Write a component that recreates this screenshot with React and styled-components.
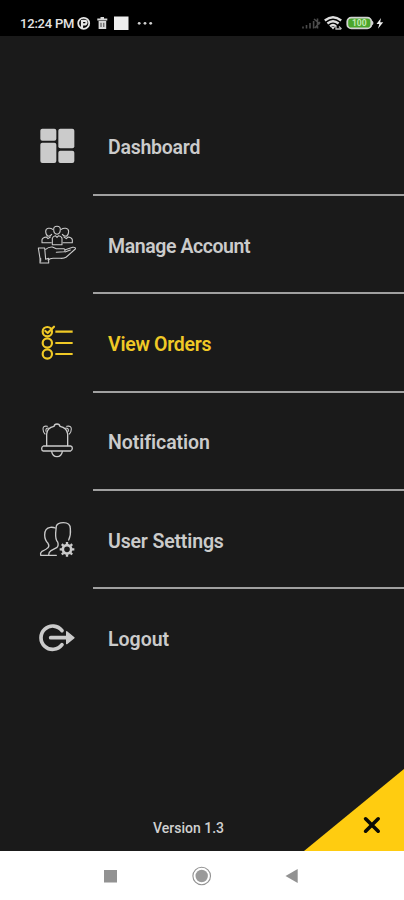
import React from "react";
import styled, { createGlobalStyle } from "styled-components";

const MENU = [
  { label: "Dashboard", icon: DashboardIcon, spacing: -0.25 },
  { label: "Manage Account", icon: ManageIcon, spacing: -0.42 },
  { label: "View Orders", icon: OrdersIcon, spacing: -0.27, active: true },
  { label: "Notification", icon: BellIcon, spacing: -0.06 },
  { label: "User Settings", icon: UsersIcon, spacing: -0.16 },
  { label: "Logout", icon: LogoutIcon, spacing: 0 },
];

export default function App() {
  return (
    <>
      <GlobalStyle />
      <Phone>
        <StatusBar>
          <Clock>12:24 PM</Clock>
          <StatusLeftIcons />
          <StatusRightIcons />
        </StatusBar>
        <Drawer>
          <Menu>
            {MENU.map(({ label, icon: Icon, spacing, active }) => (
              <MenuItem key={label} $active={active}>
                <IconBox>
                  <Icon />
                </IconBox>
                <MenuLabel $spacing={spacing}>{label}</MenuLabel>
              </MenuItem>
            ))}
          </Menu>
          <Footer>
            <Version>Version 1.3</Version>
            <CloseButton aria-label="Close">
              <svg width="20" height="20" viewBox="0 0 20 20">
                <path
                  d="M3.6 3.8L16.2 16.2M16.2 3.8L3.6 16.2"
                  stroke="#0b0b05"
                  strokeWidth="3.6"
                  strokeLinecap="round"
                />
              </svg>
            </CloseButton>
          </Footer>
        </Drawer>
        <NavBar>
          <NavIcons />
        </NavBar>
      </Phone>
    </>
  );
}

function StatusLeftIcons() {
  return (
    <svg width="78" height="18" viewBox="76 14 78 18">
      <circle cx="83.7" cy="23.3" r="5.5" fill="none" stroke="#e6e6e6" strokeWidth="1.8" />
      <path d="M82 20V28M82 20.8H85.4A2 2 0 0 1 85.4 24.4H83" fill="none" stroke="#e6e6e6" strokeWidth="2.2" />
      <path d="M97.3 19.5H107.3M100.5 18H104" stroke="#d8d8d8" strokeWidth="1.8" />
      <path d="M98.6 21H106.2V29H98.6Z" fill="#d8d8d8" />
      <path d="M101 22.8V27M103.8 22.8V27" stroke="#444" strokeWidth="1" />
      <rect x="114" y="16.5" width="14.5" height="13.5" fill="#efefef" />
      <g fill="#d0d0d0">
        <circle cx="139.2" cy="23.3" r="1.4" />
        <circle cx="145" cy="23.3" r="1.4" />
        <circle cx="150.7" cy="23.3" r="1.4" />
      </g>
    </svg>
  );
}

function StatusRightIcons() {
  return (
    <RightIcons width="86" height="18" viewBox="300 14 86 18">
      <path
        d="M303 28.5V26.5M306.5 28.5V25M310 28.5V23M313.6 28.5V21M317.5 28.5V18.5M314 19L320 24M320 22L315 28"
        stroke="#4c4c4c"
        strokeWidth="1.6"
      />
      <g fill="none" stroke="#dedede" strokeWidth="2.3">
        <path d="M324.8 20.5Q333 14 341.2 20.5" />
        <path d="M327.4 23.5Q333 19 338.6 23.5" />
        <path d="M330 26.3Q333 23.8 336 26.3" />
      </g>
      <path d="M330.8 26.8L333 29.5L335 27Z" fill="#dedede" />
      <path d="M336 26V29H341M339 26.5L341.5 29" stroke="#bbb" strokeWidth="1.3" fill="none" />
      <rect x="347.3" y="17.6" width="24" height="10.8" rx="4" fill="#4aa52b" stroke="#d2d2d2" strokeWidth="1.8" />
      <path d="M372 20.5Q375 23 372 25.5Z" fill="#d2d2d2" />
      <text
        x="359.3"
        y="26.1"
        textAnchor="middle"
        fontFamily="Roboto, sans-serif"
        fontSize="8.5"
        fontWeight="700"
        fill="#c3eab2"
      >
        100
      </text>
      <path d="M381 18L376.5 24H379.3L378 28.7L383.2 22.2H380.2Z" fill="#eee" />
    </RightIcons>
  );
}

function DashboardIcon() {
  return (
    <svg viewBox="51 48 120 120" fill="currentColor">
      <rect x="61" y="56" width="48" height="36" rx="6" />
      <rect x="115" y="56" width="48" height="59" rx="6" />
      <rect x="61" y="98" width="48" height="61" rx="6" />
      <rect x="115" y="122" width="48" height="37" rx="6" />
    </svg>
  );
}

function ManageIcon() {
  return (
    <Outline viewBox="51 43 120 120" $width={3.2}>
      <path d="M101 56Q101 47 111 47T121 56Q121 70 111 71Q101 70 101 56Z" />
      <path d="M97 102V83Q98 77 106 75L111 80L116 75Q125 77 126 83V102Z" />
      <path d="M98 56Q93 52 85 53Q77 54 77 63Q78 74 84 77Q91 77 95 71" />
      <path d="M94 96H66V87Q68 80 79 79L84 84L91 79" />
      <path d="M124 56Q129 52 137 53Q146 54 146 63Q145 74 139 77Q131 77 127 71" />
      <path d="M129 96H157V87Q155 80 144 79L139 84L132 79" />
      <path d="M55 112H74L77 146L86 143V157H60V143Z" />
      <path d="M77 116Q86 108 97 109L109 114H132Q139 118 132 123L109 125M136 117L158 110Q168 109 166 115L139 139Q132 144 121 143H99Q90 143 84 148" />
      <path d="M62 143V152M135 124L151 118" />
    </Outline>
  );
}

function OrdersIcon() {
  return (
    <Outline viewBox="51 38 120 120" $width={6.5}>
      <circle cx="82" cy="64" r="14" />
      <circle cx="82" cy="98" r="14" />
      <circle cx="82" cy="131" r="14" />
      <path d="M76 62L83 68L102 49" />
      <path d="M106 64H158M106 98H158M106 131H158" strokeLinecap="butt" />
    </Outline>
  );
}

function BellIcon() {
  return (
    <Outline viewBox="51 33 120 120" $width={4}>
      <path d="M80 107V72Q81 53 102 49Q103 42 111 42T120 49Q141 53 143 72V107" />
      <path d="M70 108H152Q157 109 157 115T152 123H70Q65 122 65 116T70 108Z" />
      <path d="M95 125Q98 140 111 140T127 125" />
      <g strokeWidth="3.2">
        <path d="M82 49Q69 46 69 57Q69 66 75 72M85 54Q76 54 78 64" />
        <path d="M140 49Q154 46 154 57Q154 66 148 72M137 54Q147 54 145 64" />
      </g>
    </Outline>
  );
}

function UsersIcon() {
  return (
    <Outline viewBox="51 43 120 120" $width={4}>
      <path d="M109 149H62Q60 142 66 137Q80 131 84 126Q89 121 84 113Q74 103 74 88Q74 67 91 65Q99 64 106 67" />
      <path d="M86 148Q86 139 93 135L110 126Q117 120 113 109Q106 102 107 82L109 61Q113 51 130 51Q151 51 151 69Q153 88 146 103" />
      <circle cx="141" cy="131" r="12.5" strokeWidth="8" />
      <path
        d="M141 109V116M141 146V153M119 131H126M156 131H163M125.5 115.5L130.5 120.5M151.5 141.5L156.5 146.5M156.5 115.5L151.5 120.5M130.5 141.5L125.5 146.5"
        strokeWidth="7"
        strokeLinecap="butt"
      />
    </Outline>
  );
}

function LogoutIcon() {
  return (
    <Outline viewBox="51 38 120 120" $width={11}>
      <path d="M126 76A35 35 0 1 0 126 118" />
      <path d="M92 97H148" />
      <path d="M140 79L162 97L140 115Z" fill="currentColor" strokeWidth="4" />
    </Outline>
  );
}

function NavIcons() {
  return (
    <svg width="404" height="48" viewBox="0 852 404 48">
      <rect x="104" y="870" width="13" height="12.5" fill="#929292" />
      <circle cx="201.7" cy="876" r="8.8" fill="none" stroke="#929292" strokeWidth="1.1" />
      <circle cx="201.7" cy="876" r="6.2" fill="#9a9a9a" />
      <path d="M285.5 876L297.7 869V883Z" fill="#929292" />
    </svg>
  );
}

const GlobalStyle = createGlobalStyle`
  * {
    box-sizing: border-box;
  }

  body {
    margin: 0;
    background: #1a1a1a;
  }
`;

const Phone = styled.div`
  display: flex;
  flex-direction: column;
  width: 404px;
  height: 900px;
  overflow: hidden;
  font-family: Roboto, "Liberation Sans", sans-serif;
`;

const StatusBar = styled.div`
  display: flex;
  align-items: center;
  flex: none;
  height: 36px;
  padding: 10px 18px 0 20px;
  background: #000;
`;

const Clock = styled.div`
  width: 56px;
  font-size: 13px;
  font-weight: 500;
  letter-spacing: -0.2px;
  white-space: nowrap;
  color: #e4e4e4;
`;

const RightIcons = styled.svg`
  margin-left: auto;
`;

const Drawer = styled.div`
  display: flex;
  flex-direction: column;
  justify-content: space-between;
  flex: 1;
  padding-top: 61.7px;
  background: #1a1a1a;
`;

const Menu = styled.div`
  display: flex;
  flex-direction: column;
`;

const MenuItem = styled.div`
  display: flex;
  align-items: center;
  height: 98.3px;
  padding-left: 37px;
  color: ${({ $active }) => ($active ? "#f0c926" : "#cbcbcb")};
`;

const IconBox = styled.div`
  flex: none;
  width: 56px;
  height: 41px;

  svg {
    display: block;
    width: 40px;
    height: 40px;
  }
`;

const Outline = styled.svg`
  fill: none;
  stroke: currentColor;
  stroke-width: ${({ $width }) => $width};
  stroke-linecap: round;
  stroke-linejoin: round;
`;

const MenuLabel = styled.div`
  display: flex;
  align-items: center;
  flex: 1;
  height: 100%;
  padding: 4px 0 0 15px;
  font-size: 19.5px;
  font-weight: 600;
  letter-spacing: ${({ $spacing }) => $spacing}px;
  white-space: nowrap;

  ${MenuItem}:not(:last-child) & {
    border-bottom: 2px solid #a0a0a0;
  }

  ${MenuItem}:last-child & {
    padding-top: 2px;
  }
`;

const Footer = styled.div`
  display: flex;
  align-items: flex-end;
  justify-content: space-between;
  height: 82px;
  padding-left: 153px;
`;

const Version = styled.div`
  padding-bottom: 14px;
  font-size: 14px;
  font-weight: 500;
  line-height: 18px;
  color: #d0d0d0;
`;

const CloseButton = styled.button`
  display: flex;
  align-items: center;
  width: 100px;
  height: 82px;
  padding: 30px 0 0 58px;
  border: 0;
  background: #ffcc10;
  clip-path: polygon(100% 0, 100% 100%, 0 100%);
`;

const NavBar = styled.div`
  flex: none;
  height: 49px;
  padding-top: 1px;
  background: #fff;
`;
